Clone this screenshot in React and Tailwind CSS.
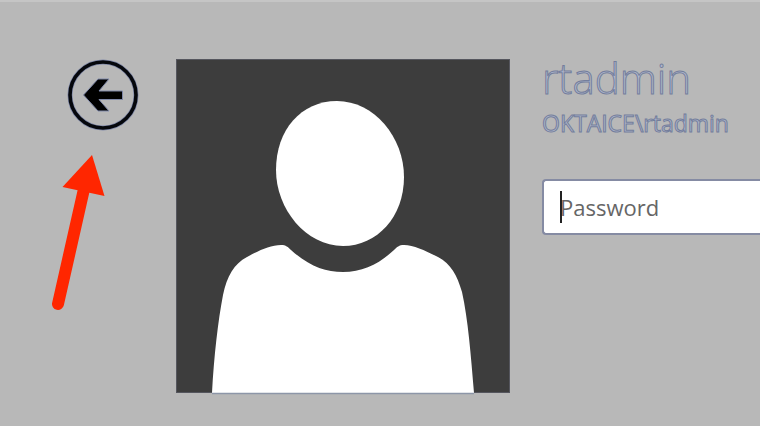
function BackButton() {
  return (
    <button type="button" aria-label="Back" className="self-end rounded-full">
      <svg viewBox="0 0 72 72" className="block size-[72px]">
        <circle cx="36" cy="36" r="33" fill="none" stroke="#7f88a8" strokeWidth="5" />
        <circle cx="36" cy="36" r="33" fill="none" stroke="#05070c" strokeWidth="3.6" />
        <path
          d="M16.500 36 L31 20 H42 L32 32 H55.500 V40.500 H32 L42 52 H31 Z"
          fill="#000"
          stroke="#7f88a8"
          strokeWidth="1"
        />
      </svg>
    </button>
  );
}

function Pointer() {
  return (
    <svg viewBox="0 0 58 158" aria-hidden="true" className="block h-[158px] w-[58px] self-start">
      <path d="M10 149 L36 34" stroke="#ff2600" strokeWidth="12" strokeLinecap="round" />
      <path d="M44 0 L14.500 32 L56.500 41 Z" fill="#ff2600" />
    </svg>
  );
}

function Avatar() {
  return (
    <svg viewBox="0 0 334 336" role="img" aria-label="User" className="block h-[336px] w-[334px] shrink-0">
      <rect x="0.5" y="0.5" width="333" height="333" fill="#3d3d3d" stroke="#55565e" />
      <path
        d="M161 42 C198 42 228 78 228 118 C228 158 201 187 167 187 C130 187 100 150 100 111 C100 71 125 42 161 42 Z"
        fill="#fff"
      />
      <path
        d="M36 334 C38 297 42 262 47 236 C51 217 58 205 71 198 C82 192 94 186 105 186 C110 186 112 188 115 191 C133 207 149 213 167 213 C187 213 203 205 218 191 C221 188 223 186 228 186 C238 186 250 192 262 198 C275 205 281 216 286 233 C292 260 295 297 298 334 Z"
        fill="#fff"
      />
      <path d="M36 334.500 H298" stroke="#8d96a8" strokeWidth="1.500" />
    </svg>
  );
}

export default function App() {
  return (
    <main className="min-h-screen overflow-hidden border-t-2 border-[#c5c5c5] bg-[#b8b8b8] font-['Open_Sans','Noto_Sans',sans-serif]">
      <div className="flex items-start pt-[57px] pl-12">
        <div className="flex w-[91px] shrink-0 flex-col gap-6">
          <BackButton />
          <Pointer />
        </div>
        <div className="ml-[37px]">
          <Avatar />
        </div>
        <form className="ml-8 min-w-0 flex-1" onSubmit={(e) => e.preventDefault()}>
          <h1 className="text-[42px] leading-[38px] font-light whitespace-nowrap text-[#b0b8cc] [-webkit-text-stroke:1px_#747e9c]">
            rtadmin
          </h1>
          <p className="mt-3 text-[23px] leading-7 whitespace-nowrap text-[#b0b8cc] [-webkit-text-stroke:1px_#747e9c]">
            OKTAICE\rtadmin
          </p>
          <div className="relative mt-[42px]">
            <input
              type="password"
              aria-label="Password"
              placeholder="Password"
              className="block h-14 w-full rounded-l-sm border-2 border-r-0 border-[#858ba3] bg-white pl-4 text-[22px] text-[#555] outline-none placeholder:text-[#666]"
            />
            <span className="absolute top-3 left-[18px] h-8 w-0.5 bg-[#222]" />
          </div>
        </form>
      </div>
    </main>
  );
}
